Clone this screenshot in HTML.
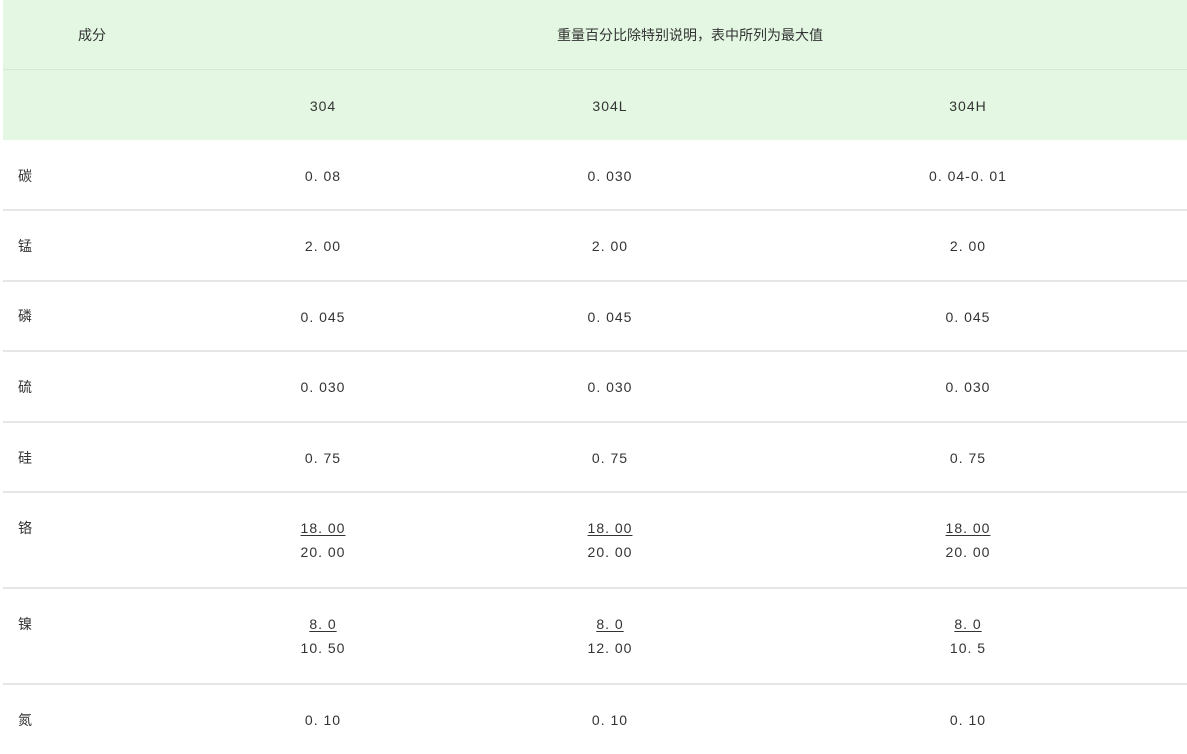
<!DOCTYPE html>
<html><head><meta charset="utf-8"><style>
body{margin:0;width:1187px;height:754px;background:#fff;position:relative;overflow:hidden;font-family:"Liberation Sans","Noto Sans CJK SC",sans-serif;font-size:14px;color:#333}
.g{position:absolute;left:3px;top:0;width:1184px;height:140px;background:#e3f7e3}
.hl{position:absolute;left:3px;width:1184px;height:1px;background:#d3ebd3}
.l{position:absolute;left:3px;width:1184px;height:2px;background:#e6e6e6}
.t{position:absolute;transform:translate(-50%,-50%);white-space:nowrap;letter-spacing:1px;text-align:center;line-height:24px}
.k{position:absolute;transform:translateY(-50%);left:18px}
u{text-decoration:underline;text-underline-offset:2px}
</style></head><body>
<div class="g"></div>
<div class="hl" style="top:69px"></div>
<div class="t" style="left:92px;top:35px;letter-spacing:0">成分</div>
<div class="t" style="left:690px;top:35px;letter-spacing:0">重量百分比除特别说明，表中所列为最大值</div>
<div class="t" style="left:323px;top:106px">304</div>
<div class="t" style="left:610px;top:106px">304L</div>
<div class="t" style="left:968px;top:106px">304H</div>
<div class="l" style="top:209px"></div>
<div class="l" style="top:280px"></div>
<div class="l" style="top:350px"></div>
<div class="l" style="top:421px"></div>
<div class="l" style="top:491px"></div>
<div class="l" style="top:587px"></div>
<div class="l" style="top:683px"></div>

<div class="k" style="top:176px">碳</div>
<div class="t" style="left:323px;top:176px">0. 08</div>
<div class="t" style="left:610px;top:176px">0. 030</div>
<div class="t" style="left:968px;top:176px">0. 04-0. 01</div>

<div class="k" style="top:246px">锰</div>
<div class="t" style="left:323px;top:246px">2. 00</div>
<div class="t" style="left:610px;top:246px">2. 00</div>
<div class="t" style="left:968px;top:246px">2. 00</div>

<div class="k" style="top:316px">磷</div>
<div class="t" style="left:323px;top:317px">0. 045</div>
<div class="t" style="left:610px;top:317px">0. 045</div>
<div class="t" style="left:968px;top:317px">0. 045</div>

<div class="k" style="top:387px">硫</div>
<div class="t" style="left:323px;top:387px">0. 030</div>
<div class="t" style="left:610px;top:387px">0. 030</div>
<div class="t" style="left:968px;top:387px">0. 030</div>

<div class="k" style="top:458px">硅</div>
<div class="t" style="left:323px;top:458px">0. 75</div>
<div class="t" style="left:610px;top:458px">0. 75</div>
<div class="t" style="left:968px;top:458px">0. 75</div>

<div class="k" style="top:528px">铬</div>
<div class="t" style="left:323px;top:540px"><u>18. 00</u><br>20. 00</div>
<div class="t" style="left:610px;top:540px"><u>18. 00</u><br>20. 00</div>
<div class="t" style="left:968px;top:540px"><u>18. 00</u><br>20. 00</div>

<div class="k" style="top:624px">镍</div>
<div class="t" style="left:323px;top:636px"><u>8. 0</u><br>10. 50</div>
<div class="t" style="left:610px;top:636px"><u>8. 0</u><br>12. 00</div>
<div class="t" style="left:968px;top:636px"><u>8. 0</u><br>10. 5</div>

<div class="k" style="top:720px">氮</div>
<div class="t" style="left:323px;top:720px">0. 10</div>
<div class="t" style="left:610px;top:720px">0. 10</div>
<div class="t" style="left:968px;top:720px">0. 10</div>
</body></html>
